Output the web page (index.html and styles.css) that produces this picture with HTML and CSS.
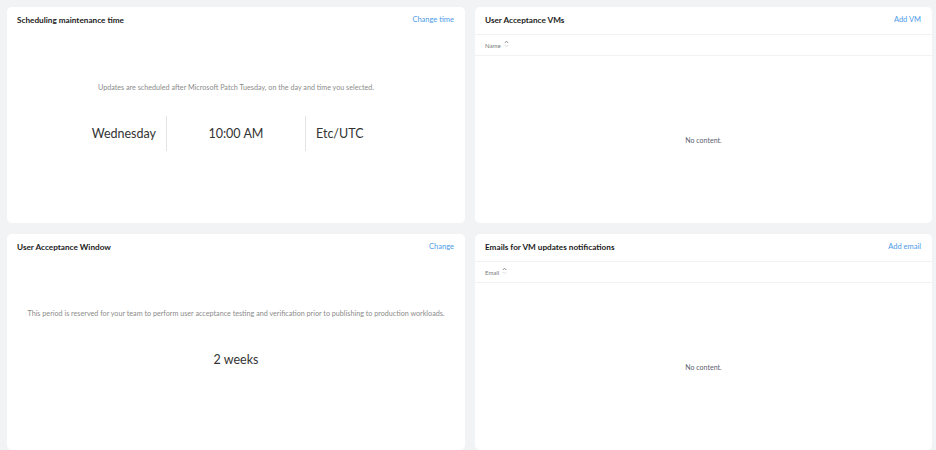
FILE: index.html
```html
<!DOCTYPE html>
<html lang="en">
<head>
    <meta charset="UTF-8">
    <meta name="viewport" content="width=device-width, initial-scale=1.0">
    <title>VM updates</title>
    <link rel="stylesheet" href="styles.css">
</head>
<body>

    <div class="grid">
        <!-- Scheduling -->
        <div class="card">
            <div class="card-header">
                <span class="card-title">Scheduling maintenance time</span>
                <a class="card-link" href="#">Change time</a>
            </div>
            <div class="card-body schedule">
                <p class="desc">Updates are scheduled after Microsoft Patch Tuesday, on the day and time you selected.</p>
                <div class="values">
                    <div class="value value-left">Wednesday</div>
                    <div class="value value-mid">10:00 AM</div>
                    <div class="value value-right">Etc/UTC</div>
                </div>
            </div>
        </div>

        <!-- VMs -->
        <div class="card">
            <div class="card-header lined">
                <span class="card-title">User Acceptance VMs</span>
                <a class="card-link" href="#">Add VM</a>
            </div>
            <div class="col-header">
                <span>Name</span>
                <svg class="sort" width="5" height="8" viewBox="0 0 5 8">
                    <path d="M0.8 3 L2.5 1.2 L4.2 3" fill="none" stroke="#777" stroke-width="0.8"/>
                    <path d="M0.8 5 L2.5 6.8 L4.2 5" fill="none" stroke="#d4d4d4" stroke-width="0.8"/>
                </svg>
            </div>
            <div class="empty">No content.</div>
        </div>

        <!-- Window -->
        <div class="card">
            <div class="card-header">
                <span class="card-title">User Acceptance Window</span>
                <a class="card-link" href="#">Change</a>
            </div>
            <div class="card-body window">
                <p class="desc">This period is reserved for your team to perform user acceptance testing and verification prior to publishing to production workloads.</p>
                <div class="weeks">2 weeks</div>
            </div>
        </div>

        <!-- Emails -->
        <div class="card">
            <div class="card-header lined">
                <span class="card-title">Emails for VM updates notifications</span>
                <a class="card-link" href="#">Add email</a>
            </div>
            <div class="col-header">
                <span>Email</span>
                <svg class="sort" width="5" height="8" viewBox="0 0 5 8">
                    <path d="M0.8 3 L2.5 1.2 L4.2 3" fill="none" stroke="#777" stroke-width="0.8"/>
                    <path d="M0.8 5 L2.5 6.8 L4.2 5" fill="none" stroke="#d4d4d4" stroke-width="0.8"/>
                </svg>
            </div>
            <div class="empty">No content.</div>
        </div>
    </div>

</body>
</html>
```

FILE: styles.css
```css
body {
    background-color: #f2f3f5;
    font-family: Lato, "Open Sans", Arial, sans-serif;
    margin: 0;
    padding: 0;
    height: 450px;
    overflow: hidden;
}

.grid {
    display: grid;
    grid-template-columns: 458px 457px;
    grid-template-rows: 216px 216px;
    column-gap: 10px;
    row-gap: 11px;
    padding: 7px 4px 0 7px;
}

.card {
    background: white;
    border-radius: 5px;
    display: flex;
    flex-direction: column;
    overflow: hidden;
}

.card-header {
    display: flex;
    justify-content: space-between;
    align-items: center;
    height: 25px;
    padding: 0 11px 2px 10px;
    flex-shrink: 0;
}

.card-header.lined {
    border-bottom: 1px solid #f2f2f2;
}

.card-title {
    font-size: 8.2px;
    font-weight: bold;
    color: #1b1b1b;
}

.card-link {
    font-size: 7.5px;
    color: #4b9be9;
    text-decoration: none;
}

.card-body {
    text-align: center;
}

.desc {
    margin: 0;
    font-size: 7.2px;
    line-height: 10px;
    color: #8c8c8c;
}

.schedule {
    padding-top: 49px;
}

.values {
    display: grid;
    grid-template-columns: 1fr 140px 1fr;
    margin-top: 23px;
    height: 35px;
}

.value {
    font-size: 12.5px;
    color: #333;
    line-height: 35px;
}

.value-left {
    text-align: right;
    padding-right: 10px;
}

.value-mid {
    text-align: center;
    border-left: 1px solid #e4e4e4;
    border-right: 1px solid #e4e4e4;
}

.value-right {
    text-align: left;
    padding-left: 10px;
}

.window {
    padding-top: 48px;
}

.weeks {
    margin-top: 33px;
    font-size: 12.5px;
    line-height: 16px;
    color: #333;
}

.col-header {
    display: flex;
    align-items: center;
    gap: 3px;
    height: 20px;
    padding: 0 10px;
    border-bottom: 1px solid #f2f2f2;
    font-size: 6px;
    color: #777;
    flex-shrink: 0;
}

.sort {
    margin-top: -2px;
}

.empty {
    flex: 1;
    display: flex;
    align-items: center;
    justify-content: center;
    font-size: 7px;
    color: #5a6270;
}
```
